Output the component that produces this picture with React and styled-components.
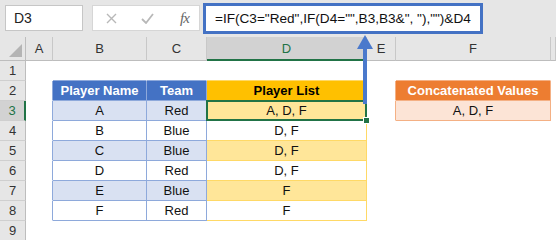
import React from 'react'
import styled, { createGlobalStyle, css } from 'styled-components'

const GlobalStyle = createGlobalStyle`
  html, body { margin: 0; padding: 0; background: #fff; }
  body {
    width: 556px;
    height: 240px;
    overflow: hidden;
    font-family: "Liberation Sans", Arial, sans-serif;
  }
`

const BLUE = { head: '#4472c4', light: '#d9e1f2', line: '#8ea9db', text: '#fff' }
const GOLD = { head: '#ffc000', light: '#ffe699', line: '#ffd966', text: '#000' }
const ORANGE = { head: '#ed7d31', light: '#fce4d6', line: '#f4b084', text: '#fff' }
const GREEN = '#217346'

const players = [
	['A', 'Red', 'A, D, F'],
	['B', 'Blue', 'D, F'],
	['C', 'Blue', 'D, F'],
	['D', 'Red', 'D, F'],
	['E', 'Blue', 'F'],
	['F', 'Red', 'F'],
]

const Page = styled.div`
  position: relative;
  width: 556px;
  height: 240px;
  overflow: hidden;
`

const FormulaBar = styled.div`
  display: flex;
  align-items: flex-start;
  height: 37px;
  padding: 5px 0 0 5px;
  box-sizing: border-box;
  background: #e6e6e6;
`

const NameBox = styled.div`
  display: flex;
  align-items: center;
  width: 78px;
  height: 26px;
  box-sizing: border-box;
  padding-left: 8px;
  background: #fff;
  border: 1px solid #c6c6c6;
  font-size: 14px;
  color: #222;
`

const ButtonBox = styled.div`
  display: flex;
  align-items: center;
  gap: 24px;
  width: 108px;
  height: 26px;
  margin-left: 9px;
  padding-left: 13px;
  box-sizing: border-box;
  background: #fff;
  border: 1px solid #d6d6d6;
`

const Fx = styled.span`
  font-family: "Liberation Serif", serif;
  font-style: italic;
  font-size: 15px;
  color: #666;
  letter-spacing: -1px;
  margin-left: 2px;
`

const FormulaBox = styled.div`
  display: flex;
  align-items: center;
  width: 280px;
  height: 31px;
  margin: -2px 0 0 3px;
  padding-left: 9px;
  box-sizing: border-box;
  background: #fff;
  border: 3px solid #4472c4;
  font-size: 13.6px;
  color: #111;
  white-space: nowrap;
`

const Sheet = styled.div`
  display: grid;
  grid-template-columns: 26px 27px 94px 60px 160px 29px 155px 1fr;
  grid-template-rows: 24px repeat(9, 20px);
`

const headBase = css`
  display: flex;
  align-items: center;
  justify-content: center;
  box-sizing: border-box;
  background: ${p => (p.$active ? '#d2d2d2' : '#e6e6e6')};
  color: ${p => (p.$active ? GREEN : '#333')};
  font-size: 13px;
`

const Corner = styled.div`
  position: relative;
  background: #e6e6e6;
  border-right: 1px solid #bdbdbd;
  border-bottom: 1px solid #bdbdbd;
  box-sizing: border-box;

  &::after {
    content: '';
    position: absolute;
    right: 3px;
    bottom: 3px;
    border-style: solid;
    border-width: 0 0 13px 13px;
    border-color: transparent transparent #b4b4b4 transparent;
  }
`

const ColHead = styled.div`
  ${headBase}
  border-right: 1px solid #c8c8c8;
  border-bottom: ${p => (p.$active ? `2px solid ${GREEN}` : '1px solid #bdbdbd')};
  padding-top: ${p => (p.$active ? '1px' : '0')};
`

const RowHead = styled.div`
  ${headBase}
  border-right: ${p => (p.$active ? `2px solid ${GREEN}` : '1px solid #bdbdbd')};
  border-bottom: 1px solid #cfcfcf;
`

const Cell = styled.div`
  position: relative;
  display: flex;
  align-items: center;
  justify-content: center;
  box-sizing: border-box;
  background: ${p => p.$fill || '#fff'};
  color: ${p => p.$color || '#111'};
  font-size: 13px;
  font-weight: ${p => (p.$bold ? 700 : 400)};
  border-right: 1px solid ${p => p.$r || 'transparent'};
  border-bottom: 1px solid ${p => p.$b || 'transparent'};
  white-space: nowrap;

  ${p => p.$selected && css`
    &::before {
      content: '';
      position: absolute;
      left: -1px;
      top: -1px;
      right: -1px;
      bottom: -1px;
      border: 2px solid ${GREEN};
      z-index: 2;
    }
    &::after {
      content: '';
      position: absolute;
      right: -4px;
      bottom: -4px;
      width: 5px;
      height: 5px;
      background: ${GREEN};
      border: 1px solid #fff;
      z-index: 3;
    }
  `}
`

const Arrow = styled.svg`
  position: absolute;
  left: 357px;
  top: 35px;
  z-index: 5;
`

const letters = ['A', 'B', 'C', 'D', 'E', 'F', 'G']

function buildRow(r) {
	// r: sheet row number 1..9; returns the cells of columns A..G
	const cells = []
	const idx = r - 3
	const player = players[idx]
	const striped = idx % 2 === 0
	for (let c = 0; c < 7; c++) {
		const col = letters[c]
		let props = {}
		let text = ''
		if (r === 1) {
			if (col === 'B' || col === 'C') props = { $b: BLUE.line }
			if (col === 'D') props = { $b: GOLD.line }
			if (col === 'F') props = { $b: ORANGE.line }
		} else if (r >= 2 && r <= 8) {
			if (col === 'A') props = { $r: BLUE.line }
			if (col === 'B' || col === 'C' || col === 'D') {
				const t = col === 'D' ? GOLD : BLUE
				if (r === 2) {
					props = { $fill: t.head, $color: t.text, $bold: true, $r: t === GOLD ? t.line : BLUE.line, $b: t.line }
					text = col === 'B' ? 'Player Name' : col === 'C' ? 'Team' : 'Player List'
				} else {
					props = { $fill: striped ? t.light : '#fff', $r: t.line, $b: t.line }
					text = player[c - 1]
					if (col === 'D' && r === 3) props.$selected = true
				}
			}
			if (col === 'E' && r <= 3) props = { $r: ORANGE.line }
			if (col === 'F' && r === 2) {
				props = { $fill: ORANGE.head, $color: '#fff', $bold: true, $r: ORANGE.line, $b: ORANGE.line }
				text = 'Concatenated Values'
			}
			if (col === 'F' && r === 3) {
				props = { $fill: ORANGE.light, $r: ORANGE.line, $b: ORANGE.line }
				text = 'A, D, F'
			}
		}
		cells.push(<Cell key={`${col}${r}`} {...props}>{text}</Cell>)
	}
	return cells
}

export default function App() {
	return (
		<Page>
			<GlobalStyle />
			<FormulaBar>
				<NameBox>D3</NameBox>
				<ButtonBox>
					<svg width="11" height="11" viewBox="0 0 11 11">
						<path d="M1 1 L10 10 M10 1 L1 10" stroke="#b8b8b8" strokeWidth="1.4" />
					</svg>
					<svg width="13" height="11" viewBox="0 0 13 11">
						<path d="M1 6 L5 10 L12 1" stroke="#b8b8b8" strokeWidth="1.8" fill="none" />
					</svg>
					<Fx>fx</Fx>
				</ButtonBox>
				<FormulaBox>=IF(C3="Red",IF(D4="",B3,B3&amp;", "),"")&amp;D4</FormulaBox>
			</FormulaBar>
			<Sheet>
				<Corner />
				{letters.map(l => (
					<ColHead key={l} $active={l === 'D'}>{l === 'G' ? '' : l}</ColHead>
				))}
				{Array.from({ length: 9 }, (_, i) => i + 1).map(r => (
					<React.Fragment key={r}>
						<RowHead $active={r === 3}>{r}</RowHead>
						{buildRow(r)}
					</React.Fragment>
				))}
			</Sheet>
			<Arrow width="16" height="69" viewBox="0 0 16 69">
				<path d="M8 10 V69" stroke="#4a79cc" strokeWidth="4" />
				<polygon points="0,14 8,0 16,14" fill="#4a79cc" />
			</Arrow>
		</Page>
	)
}
